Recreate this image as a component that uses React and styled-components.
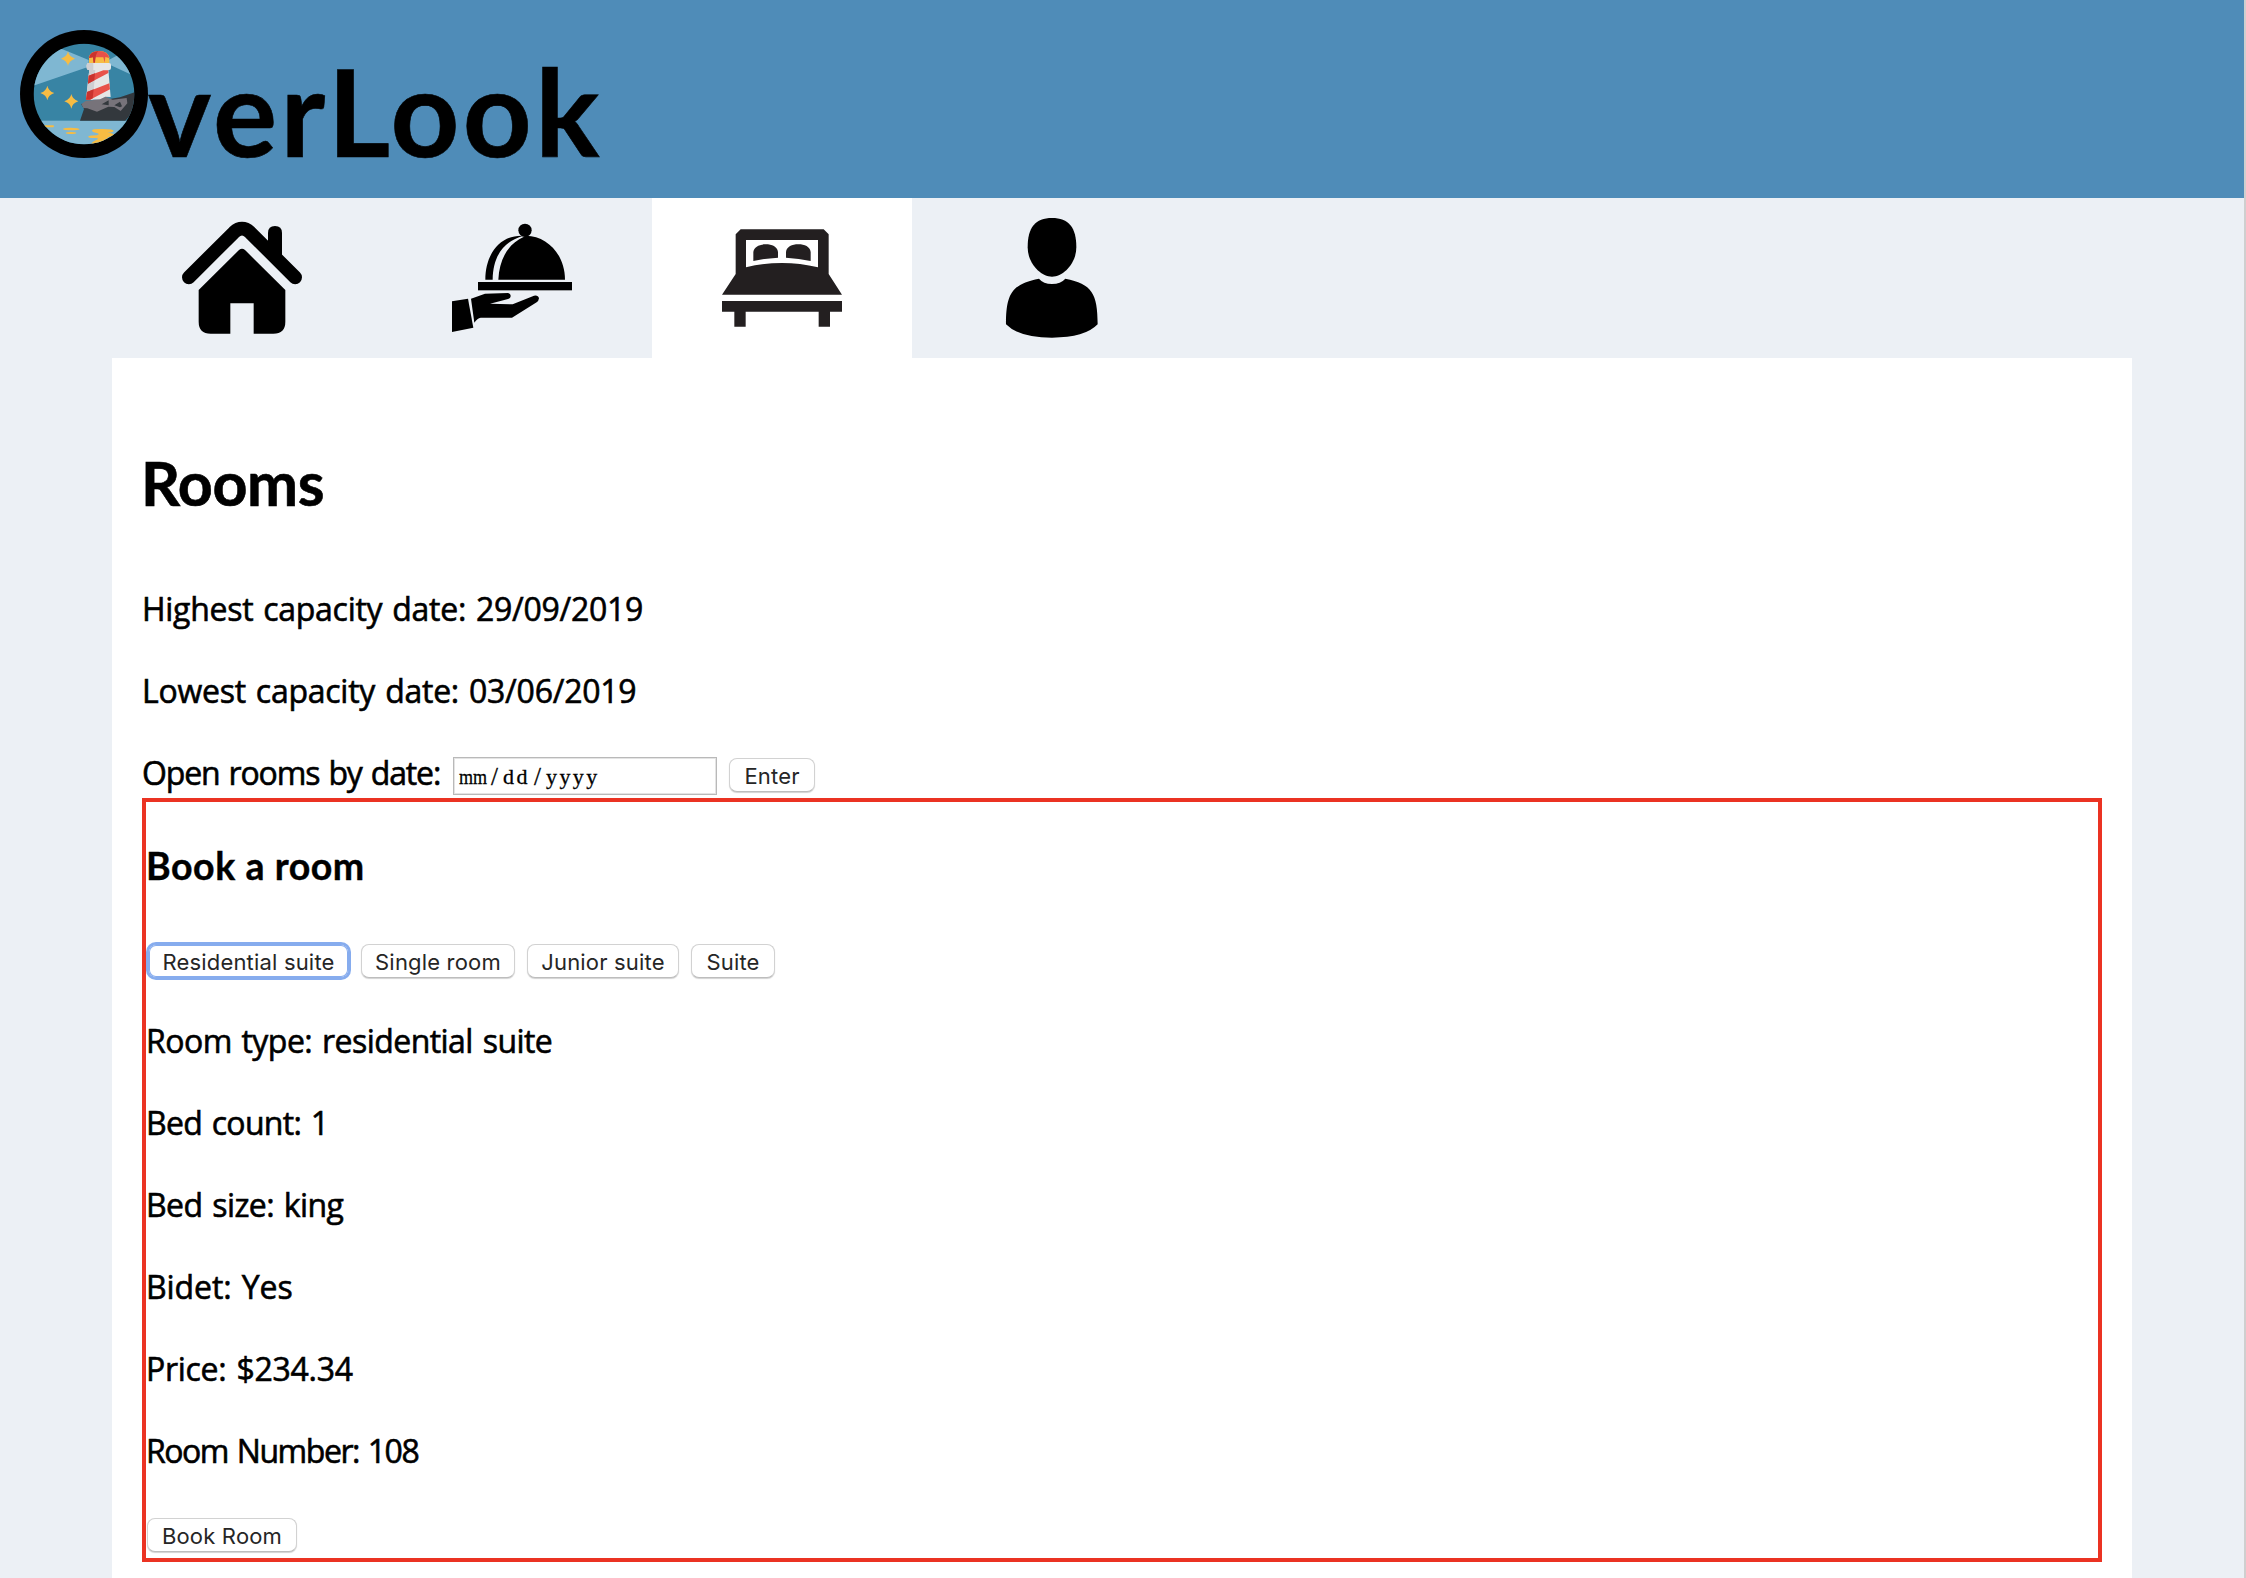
import React from 'react';
import styled, { createGlobalStyle } from 'styled-components';

const GlobalStyle = createGlobalStyle`
  * { box-sizing: border-box; }
  html, body { margin: 0; padding: 0; }
  body {
    background: #ecf0f5;
    color: #000;
    font-family: "Trebuchet MS", "Open Sans", sans-serif;
  }
`;

const Page = styled.div`
  height: 1578px;
  overflow: hidden;
  border-right: 2px solid #cfcfcf;
  background: #ecf0f5;
`;

const Header = styled.header`
  display: flex;
  align-items: flex-start;
  height: 198px;
  padding-left: 20px;
  background: #4f8cb8;
`;

const LogoMark = styled.svg`
  width: 128px;
  height: 128px;
  margin-top: 30px;
`;

const LogoText = styled.h1`
  margin: 51px 0 0;
  font-family: Lato, sans-serif;
  font-size: 120px;
  font-weight: 700;
  line-height: 1;
  letter-spacing: 3.5px;
  -webkit-text-stroke: 0.6px #000;
`;

const Tabs = styled.nav`
  display: flex;
  gap: 10px;
  height: 160px;
  padding-left: 112px;
`;

const Tab = styled.div`
  display: flex;
  align-items: center;
  justify-content: center;
  width: 260px;
  background: ${(p) => (p.$active ? '#fff' : 'transparent')};
`;

const TabIcon = styled.svg`
  width: 120px;
  height: 120px;
  fill: ${(p) => p.$color || '#000'};
`;

const Panel = styled.main`
  width: 2020px;
  height: 1220px;
  margin-left: 112px;
  padding: 0 30px;
  background: #fff;
`;

const Title = styled.h2`
  margin: 0;
  padding-top: 40px;
  font-family: Lato, sans-serif;
  font-size: 61px;
  font-weight: 700;
  line-height: 169px;
  letter-spacing: -0.4px;
  text-indent: -1px;
  -webkit-text-stroke: 0.6px #000;
`;

const Line = styled.p`
  height: 82px;
  margin: 0;
  font-size: 32px;
  line-height: 84px;
  white-space: nowrap;
  word-spacing: 2px;
  letter-spacing: ${(p) => p.$track || 0}px;
  -webkit-text-stroke: 0.6px #000;
`;

const DateRow = styled.div`
  display: flex;
  align-items: flex-start;
  height: 67px;
`;

const DateLabel = styled(Line)`
  width: 311px;
`;

const DateField = styled.div`
  display: flex;
  align-items: center;
  width: 264px;
  height: 38px;
  margin: 26px 12px 0 0;
  padding: 2px 0 0 5px;
  border: 1px solid #b9b9b9;
  box-shadow: inset 0 0 0 1px #e4e4e4;
  font-family: "Liberation Serif", serif;
  font-size: 22px;
  line-height: 34px;
  -webkit-text-stroke: 0.3px #000;
`;

const Month = styled.span`
  width: 29px;
  transform: scaleX(0.82);
  transform-origin: left;
`;

const Day = styled.span`
  width: 28px;
  letter-spacing: 2.4px;
`;

const Year = styled.span`
  letter-spacing: 2.4px;
`;

const Slash = styled.span`
  width: 15px;
  padding-left: 3px;
  font-size: 25px;
`;

const Button = styled.button`
  flex: none;
  width: ${(p) => p.$w}px;
  height: 34px;
  margin: 0;
  padding: 0;
  border: 1px solid ${(p) => (p.$focused ? '#86acee' : '#d2d2d2')};
  border-bottom-color: ${(p) => (p.$focused ? '#86acee' : '#bdbdbd')};
  border-radius: 8px;
  background: #fff;
  box-shadow: ${(p) =>
    p.$focused ? '0 0 0 2px #86acee, inset 0 0 0 1px #86acee' : '0 1px 1px rgba(0, 0, 0, 0.18)'};
  color: #262626;
  font-family: Inter, sans-serif;
  font-size: 22px;
  line-height: 34px;
  letter-spacing: 0.18px;
  white-space: nowrap;
`;

const EnterButton = styled(Button)`
  margin-top: 27px;
`;

const Booking = styled.section`
  height: 764px;
  border: 4px solid #eb3323;
`;

const BookingTitle = styled.h3`
  margin: 0;
  padding-bottom: 15px;
  font-family: Lato, sans-serif;
  font-size: 37.5px;
  font-weight: 700;
  line-height: 127px;
  letter-spacing: 0.55px;
  -webkit-text-stroke: 0.4px #000;
`;

const RoomTypes = styled.div`
  display: flex;
  gap: 12px;
  margin-bottom: 21px;
  padding-left: 2px;
`;

const BookRow = styled.div`
  display: flex;
  margin-top: 27px;
  padding-left: 1px;
`;

const STAR = 'M0 -22 Q3 -6 21 0 Q3 6 0 22 Q-3 6 -21 0 Q-3 -6 0 -22Z';

function Lighthouse() {
  return (
    <LogoMark viewBox="60 60 384 384" aria-hidden="true">
      <defs>
        <clipPath id="porthole">
          <circle cx="252" cy="252" r="151" />
        </clipPath>
      </defs>
      <circle cx="252" cy="252" r="192" fill="#000" />
      <g clipPath="url(#porthole)">
        <rect x="100" y="100" width="304" height="304" fill="#3884a4" />
        <path d="M100 100 H150 L184 116 L266 150 V170 L100 227Z" fill="#7fb7d2" />
        <path d="M326 150 L350 137 L404 120 V199 L326 163Z" fill="#7fb7d2" />
        <rect x="100" y="332" width="304" height="72" fill="#7fb7d2" />
        <path d="M240 332 L252 297 L243 282 L360 262 L404 247 V300 L376 332Z" fill="#33383d" />
        <path d="M244 282 L258 272 L284 270 L316 260 L338 269 L380 264 L382 280 L362 303 L343 291 L325 290 L291 305 L262 295 L250 294Z" fill="#77737a" />
        <path d="M305 283 L326 271 V286Z M343 286 L360 275 L366 289 L360 292Z" fill="#33383d" />
        <path d="M268 178 H325 L332 261 L316 260 L300 268 L258 270Z" fill="#e6e6e6" />
        <path d="M268 178 H286 L279 270 H258Z" fill="#cfcfd2" />
        <path d="M266 197 L310 181 H325 V189 L264 221Z M261 246 L328 220 L330 238 L270 269 H258Z" fill="#e85149" />
        <path d="M266 197 L285 190 L283 211 L264 221Z M261 246 L281 238 L278 265 L270 269 H258Z" fill="#ca332e" />
        <path d="M267 142 Q270 123 298 123 Q324 124 328 142 V162 H267Z" fill="#f7bc43" />
        <path d="M267 144 Q270 123 298 123 Q324 124 328 144 L316 141 L314 158 L310 142 H287 L283 158 L279 142Z" fill="#e85149" />
        <path d="M267 144 Q269 125 296 123 Q286 130 285 158 H280 L279 142Z" fill="#ca332e" />
        <rect x="260" y="159" width="73" height="21" rx="6" fill="#e6e6e6" />
        <path d="M266 159 H280 V180 H266 Q260 180 260 174 V165 Q260 159 266 159Z" fill="#cfcfd2" />
        <g fill="#f7bc43">
          <path d={STAR} transform="translate(204 146)" />
          <path d={STAR} transform="translate(142 249)" />
          <path d={STAR} transform="translate(214 274)" />
          <rect x="130" y="346" width="32" height="6" rx="3" />
          <path d="M188 357 Q191 353 212 353 Q238 353 239 358 Q236 361 214 361 Q190 361 188 357Z" />
          <path d="M197 369 Q199 366 213 366 Q228 366 229 369 Q227 372 213 372 Q199 372 197 369Z" />
          <path d="M276 361 Q278 356 308 357 Q342 357 341 363 Q338 368 322 368 Q340 369 342 374 Q338 379 326 381 Q322 388 314 389 L300 404 H272 Q276 395 288 390 Q302 386 286 384 Q266 385 264 380 Q270 376 290 376 Q302 372 290 369 Q276 367 276 361Z" />
        </g>
      </g>
    </LogoMark>
  );
}

function HouseIcon() {
  return (
    <TabIcon viewBox="246 84 360 360">
      <path
        d="M266.500 262 L402 127 Q426 105 450 127 L585.500 262"
        fill="none"
        stroke="#000"
        strokeWidth="41"
        strokeLinecap="round"
      />
      <path d="M504 180 V129 Q504 108 525 108 Q546 108 546 129 V215Z" />
      <path d="M417 180 Q426 172 435 180 L556 300 V395 Q556 431 520 431 H461 V340 H391 V431 H332 Q296 431 296 395 V300Z" />
    </TabIcon>
  );
}

function ServiceIcon() {
  return (
    <TabIcon viewBox="96 84 360 360">
      <circle cx="315" cy="121" r="20" />
      <path d="M196 269 C196 190 242 134 310 137 C252 154 219 196 218 269Z" />
      <path d="M235 269 C238 210 262 162 312 140 L318 137 C384 138 435 196 435 269Z" />
      <rect x="174" y="276" width="282" height="25" />
      <path d="M153 326 L195 311 L264 309 Q273 311 272 319 Q272 325 264 327 L210 341 L278 343 L342 317 Q354 314 357 325 Q356 333 350 337 L276 383 L182 383 Q172 385 163 398Z" />
      <path d="M96 334 L144 326 L160 413 L96 426Z" />
    </TabIcon>
  );
}

function BedIcon() {
  return (
    <TabIcon viewBox="246 84 360 360" $color="#231f20">
      <path
        fillRule="evenodd"
        d="M302 118 H551 L566 133 V252 L606 314 H246 L287 252 V133Z M318 150 V232 Q426 206 534 232 V150Z"
      />
      <path d="M340 213 V186 C342 170 358 163 377 163 C396 163 412 170 414 186 V203 Q375 205 340 213Z" />
      <path d="M512 213 V186 C510 170 494 163 475 163 C456 163 440 170 438 186 V203 Q477 205 512 213Z" />
      <path d="M246 333 H606 V365 H570 V410 H536 V365 H317 V410 H283 V365 H246Z" />
    </TabIcon>
  );
}

function GuestIcon() {
  return (
    <TabIcon viewBox="96 84 360 360">
      <path d="M276 84 C326 84 349 112 349 172 C349 220 310 260 276 260 C242 260 203 220 203 172 C203 112 226 84 276 84Z" />
      <path d="M237 266 Q250 282 276 282 Q302 282 316 266 C396 282 413 310 413 403 Q375 443 276 443 Q177 443 138 403 C138 310 156 282 237 266Z" />
    </TabIcon>
  );
}

const ROOM_TYPES = [
  { name: 'Residential suite', width: 201, focused: true },
  { name: 'Single room', width: 154 },
  { name: 'Junior suite', width: 152 },
  { name: 'Suite', width: 84 },
];

const DETAILS = [
  { text: 'Room type: residential suite', track: -0.54 },
  { text: 'Bed count: 1', track: -0.7 },
  { text: 'Bed size: king', track: -0.58 },
  { text: 'Bidet: Yes', track: -0.1 },
  { text: 'Price: $234.34', track: -0.28 },
  { text: 'Room Number: 108', track: -1.47 },
];

export default function App() {
  return (
    <>
      <GlobalStyle />
      <Page>
        <Header>
          <Lighthouse />
          <LogoText>verLook</LogoText>
        </Header>
        <Tabs>
          <Tab><HouseIcon /></Tab>
          <Tab><ServiceIcon /></Tab>
          <Tab $active><BedIcon /></Tab>
          <Tab><GuestIcon /></Tab>
        </Tabs>
        <Panel>
          <Title>Rooms</Title>
          <Line $track={-0.29}>Highest capacity date: 29/09/2019</Line>
          <Line $track={-0.26}>Lowest capacity date: 03/06/2019</Line>
          <DateRow>
            <DateLabel $track={-1.16}>Open rooms by date:</DateLabel>
            <DateField>
              <Month>mm</Month>
              <Slash>/</Slash>
              <Day>dd</Day>
              <Slash>/</Slash>
              <Year>yyyy</Year>
            </DateField>
            <EnterButton $w={86}>Enter</EnterButton>
          </DateRow>
          <Booking>
            <BookingTitle>Book a room</BookingTitle>
            <RoomTypes>
              {ROOM_TYPES.map((r) => (
                <Button key={r.name} $w={r.width} $focused={r.focused}>{r.name}</Button>
              ))}
            </RoomTypes>
            {DETAILS.map((d) => (
              <Line key={d.text} $track={d.track}>{d.text}</Line>
            ))}
            <BookRow>
              <Button $w={150}>Book Room</Button>
            </BookRow>
          </Booking>
        </Panel>
      </Page>
    </>
  );
}
